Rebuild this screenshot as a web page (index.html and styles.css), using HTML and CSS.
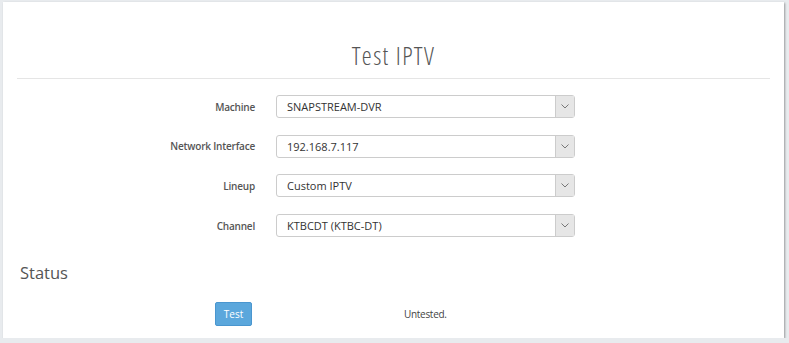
FILE: index.html
```html
<!DOCTYPE html>
<html lang="en">
<head>
  <meta charset="UTF-8" />
  <title>Test IPTV</title>
  <link rel="stylesheet" href="styles.css">
</head>
<body>
  <div class="panel">
    <div class="page-head">
      <h1>Test IPTV</h1>
    </div>

    <form class="setup">
      <div class="row">
        <label>Machine</label>
        <div class="select"><span>SNAPSTREAM-DVR</span><i class="caret"><svg viewBox="0 0 8 5" width="8" height="5"><path d="M0.5 0.5 L4 4 L7.5 0.5" fill="none" stroke="#777" stroke-width="1"/></svg></i></div>
      </div>
      <div class="row">
        <label>Network Interface</label>
        <div class="select"><span>192.168.7.117</span><i class="caret"><svg viewBox="0 0 8 5" width="8" height="5"><path d="M0.5 0.5 L4 4 L7.5 0.5" fill="none" stroke="#777" stroke-width="1"/></svg></i></div>
      </div>
      <div class="row">
        <label>Lineup</label>
        <div class="select"><span>Custom IPTV</span><i class="caret"><svg viewBox="0 0 8 5" width="8" height="5"><path d="M0.5 0.5 L4 4 L7.5 0.5" fill="none" stroke="#777" stroke-width="1"/></svg></i></div>
      </div>
      <div class="row">
        <label>Channel</label>
        <div class="select"><span>KTBCDT (KTBC-DT)</span><i class="caret"><svg viewBox="0 0 8 5" width="8" height="5"><path d="M0.5 0.5 L4 4 L7.5 0.5" fill="none" stroke="#777" stroke-width="1"/></svg></i></div>
      </div>
    </form>

    <h2>Status</h2>
    <div class="status-row">
      <button class="test-btn" type="button">Test</button>
      <span class="result">Untested.</span>
    </div>
  </div>
</body>
</html>
```

FILE: styles.css
```css
html, body {
  margin: 0;
  padding: 0;
  background: #e8ebee;
  font-family: 'Open Sans', sans-serif;
  color: #555;
}
.panel {
  width: 781px;
  height: 336px;
  margin: 2px 0 0 3px;
  background: #fff;
  box-shadow: 1px 1px 2px rgba(0,0,0,0.35);
  box-sizing: border-box;
  padding-top: 37px;
}
.page-head {
  margin: 0 14px;
  border-bottom: 1px solid #e5e5e5;
  height: 39px;
}
h1 {
  margin: 0;
  text-align: center;
  font-size: 25px;
  line-height: 32px;
  font-weight: 300;
  font-stretch: 75%;
  letter-spacing: 1.4px;
  color: #555;
}
.setup {
  margin-top: 8px;
}
.row {
  display: flex;
  align-items: center;
  height: 39.6px;
}
.row label {
  width: 252px;
  text-align: right;
  font-size: 10px;
  font-weight: 600;
  letter-spacing: -0.2px;
  color: #555;
}
.select {
  margin-left: 21px;
  width: 299px;
  height: 23px;
  box-sizing: border-box;
  border: 1px solid #ccc;
  border-radius: 3px;
  display: flex;
  align-items: center;
  font-size: 11px;
  color: #333;
}
.select span {
  flex: 1;
  padding-left: 10px;
}
.caret {
  width: 18px;
  height: 21px;
  background: #e6e6e6;
  border-left: 1px solid #ccc;
  display: flex;
  align-items: center;
  justify-content: center;
}
h2 {
  margin: 16px 0 0 17px;
  font-size: 16.5px;
  font-weight: 400;
  line-height: 24px;
  color: #555;
}
.status-row {
  display: flex;
  align-items: center;
  margin-top: 17px;
}
.test-btn {
  margin-left: 212px;
  width: 37px;
  height: 24px;
  padding: 0;
  border: 1px solid #4a96cf;
  border-radius: 2px;
  background: #5ba7dc;
  color: #fff;
  font-family: 'Open Sans', sans-serif;
  font-size: 10px;
}
.result {
  margin-left: 152px;
  font-size: 10px;
  letter-spacing: -0.3px;
  color: #444;
}
```
